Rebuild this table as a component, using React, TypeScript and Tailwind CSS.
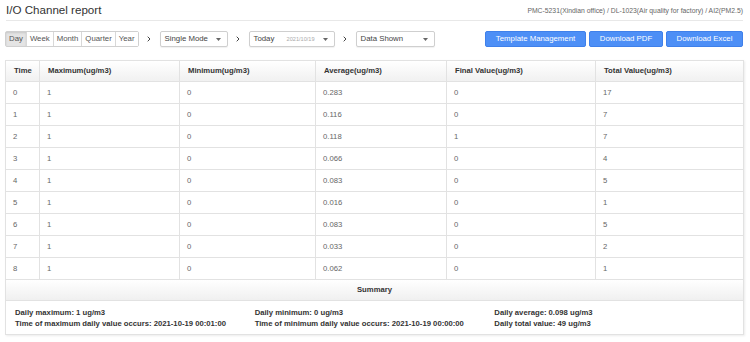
const rows = [
  ['0', '1', '0', '0.283', '0', '17'],
  ['1', '1', '0', '0.116', '0', '7'],
  ['2', '1', '0', '0.118', '1', '7'],
  ['3', '1', '0', '0.066', '0', '4'],
  ['4', '1', '0', '0.083', '0', '5'],
  ['5', '1', '0', '0.016', '0', '1'],
  ['6', '1', '0', '0.083', '0', '5'],
  ['7', '1', '0', '0.033', '0', '2'],
  ['8', '1', '0', '0.062', '0', '1'],
]

const headers = ['Time', 'Maximum(ug/m3)', 'Minimum(ug/m3)', 'Average(ug/m3)', 'Final Value(ug/m3)', 'Total Value(ug/m3)']
const colWidths = ['w-[34px]', 'w-[140px]', 'w-[136px]', 'w-[131px]', 'w-[149px]', 'w-[148px]']

function Caret() {
  return (
    <svg width="5" height="3" viewBox="0 0 5 3" className="shrink-0">
      <path d="M0 0 L5 0 L2.5 3 Z" fill="#666" />
    </svg>
  )
}

function Chevron() {
  return (
    <span className="flex w-[21px] justify-center">
      <svg width="4" height="6" viewBox="0 0 4 6">
        <path d="M0.7 0.7 L3 3 L0.7 5.3" fill="none" stroke="#444" strokeWidth="1" />
      </svg>
    </span>
  )
}

function Select({ width, label, extra }: { width: string; label: string; extra?: string }) {
  return (
    <div
      className={`flex h-[16px] ${width} items-center rounded-[2px] border border-[#cfcfcf] bg-white pl-[4px] pr-[6px] text-[7.8px] text-[#444] shadow-[0_1px_1px_rgba(0,0,0,0.06)]`}
    >
      <span className="flex-1">{label}</span>
      {extra && <span className="mr-[8px] text-[5.6px] text-[#aaa]">{extra}</span>}
      <Caret />
    </div>
  )
}

export default function App() {
  return (
    <div className="h-[342px] w-[750px] overflow-hidden bg-white pl-[5px] pr-[7px] font-['Liberation_Sans',Arial,sans-serif] antialiased">
      <div className="ml-[1px] flex h-[21px] items-end justify-between border-b border-[#e8e8e8] pb-[4px]">
        <h1 className="text-[11.6px] leading-none text-[#333]">I/O Channel report</h1>
        <span className="mb-[1px] text-[6.8px] leading-none text-[#666]">
          PMC-5231(Xindian office) / DL-1023(Air quality for factory) / AI2(PM2.5)
        </span>
      </div>

      <div className="mt-[10px] flex h-[16px] items-center">
        <div className="flex h-[16px] rounded-[2px] border border-[#d0d0d0] text-[7.8px] text-[#555]">
          {['Day', 'Week', 'Month', 'Quarter', 'Year'].map((d, i) => (
            <span
              key={d}
              className={`flex items-center px-[3px] ${i > 0 ? 'border-l border-[#d8d8d8]' : ''} ${
                i === 0 ? 'bg-[#e4e4e4] shadow-[inset_0_1px_2px_rgba(0,0,0,0.12)]' : 'bg-white'
              }`}
            >
              {d}
            </span>
          ))}
        </div>
        <Chevron />
        <Select width="w-[68px]" label="Single Mode" />
        <Chevron />
        <Select width="w-[86px]" label="Today" extra="2021/10/19" />
        <Chevron />
        <Select width="w-[79px]" label="Data Shown" />
        <div className="ml-auto flex gap-[3px]">
          {[
            ['Template Management', 'w-[101px]'],
            ['Download PDF', 'w-[74px]'],
            ['Download Excel', 'w-[77px]'],
          ].map(([t, w]) => (
            <button
              key={t}
              type="button"
              className={`flex h-[16px] ${w} items-center justify-center rounded-[2px] border border-[#3f80ea] bg-[#4d8ff6] text-[7.8px] text-white`}
            >
              {t}
            </button>
          ))}
        </div>
      </div>

      <table className="mt-[13px] w-[738px] table-fixed border-collapse border border-[#dadada] text-[7.7px] shadow-[1px_1px_2px_rgba(0,0,0,0.08)]">
        <colgroup>
          {colWidths.map((w, i) => (
            <col key={i} className={w} />
          ))}
        </colgroup>
        <thead>
          <tr className="h-[21px] bg-linear-to-b from-white to-[#f0f0f0]">
            {headers.map((h) => (
              <th key={h} className="border border-[#e2e2e2] pl-[8px] text-left font-bold text-[#333]">
                {h}
              </th>
            ))}
          </tr>
        </thead>
        <tbody>
          {rows.map((r) => (
            <tr key={r[0]} className="h-[22px]">
              {r.map((c, i) => (
                <td key={i} className="border border-[#e2e2e2] pl-[7px] text-[#666]">
                  {c}
                </td>
              ))}
            </tr>
          ))}
          <tr className="h-[21px] bg-linear-to-b from-white to-[#efefef]">
            <td colSpan={6} className="border border-[#e2e2e2] text-center font-bold text-[#333]">
              Summary
            </td>
          </tr>
          <tr className="h-[34px]">
            <td colSpan={6} className="border border-[#e2e2e2] px-[9px]">
              <div className="grid grid-cols-3 font-bold leading-[11px] text-[#333]">
                <div>
                  <div>Daily maximum: 1 ug/m3</div>
                  <div>Time of maximum daily value occurs: 2021-10-19 00:01:00</div>
                </div>
                <div>
                  <div>Daily minimum: 0 ug/m3</div>
                  <div>Time of minimum daily value occurs: 2021-10-19 00:00:00</div>
                </div>
                <div>
                  <div>Daily average: 0.098 ug/m3</div>
                  <div>Daily total value: 49 ug/m3</div>
                </div>
              </div>
            </td>
          </tr>
        </tbody>
      </table>
    </div>
  )
}
